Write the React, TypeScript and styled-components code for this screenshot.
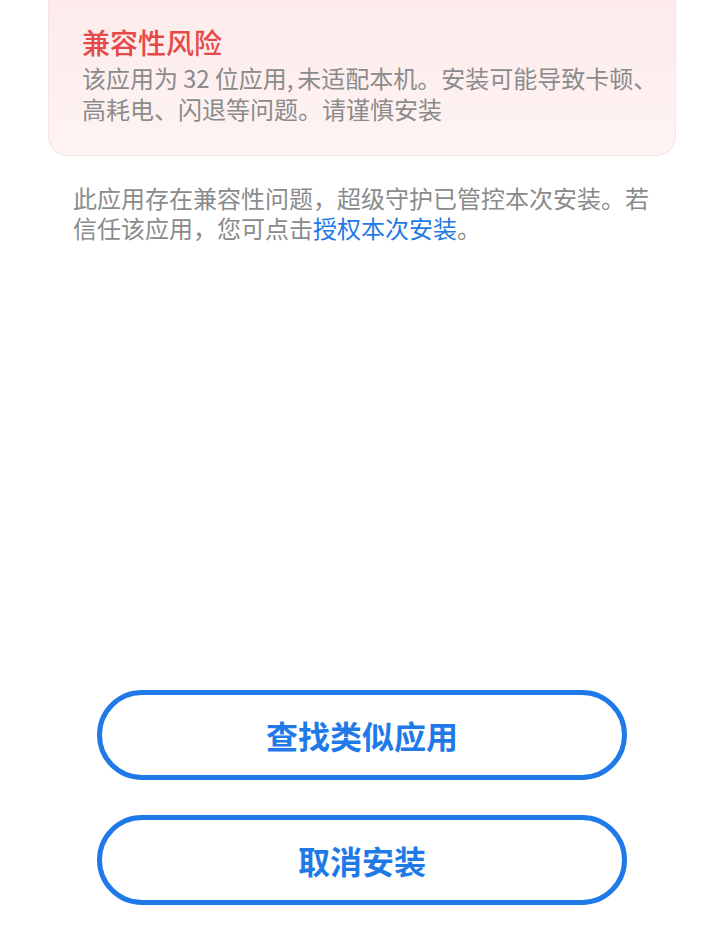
import React from 'react';
import styled, {createGlobalStyle} from "styled-components";

const Global = createGlobalStyle`
  html, body {
    margin: 0;
    padding: 0;
    background: #FFFFFF;
  }
  body {
    font-family: "Noto Sans CJK SC", "Noto Sans", sans-serif;
  }
`;

const Page = styled.main`
  display: flex;
  flex-direction: column;
  min-height: 100vh;
  box-sizing: border-box;
  padding-bottom: 41px;
`;

const RiskCard = styled.section`
  margin: 0 44px 0 48px;
  padding: 24px 12px 31px 33px;
  background: linear-gradient(180deg, #fdebeb 0%, #fef4f3 100%);
  border: 1px solid #f9e3e1;
  border-top: none;
  border-radius: 0 0 20px 20px;
`;

const RiskTitle = styled.h2`
  margin: 0;
  font-size: 28px;
  line-height: 36px;
  font-weight: 500;
  color: #e64a48;
`;

const RiskText = styled.p`
  margin: 2px 0 0;
  font-size: 24px;
  line-height: 31px;
  color: #8b8b8b;
`;

// the digits and comma sit looser in the original font
const Loose = styled.span<{ $left?: number; $right?: number }>`
  margin-left: ${p => p.$left ?? 0}px;
  margin-right: ${p => p.$right ?? 0}px;
`;

const Notice = styled.p`
  margin: 27px 56px 0 73px;
  font-size: 24px;
  line-height: 30px;
  color: #8b8b8b;
`;

const Link = styled.a`
  color: #1f7ae6;
  text-decoration: none;
`;

const Spacer = styled.div`
  flex: 1;
`;

const Actions = styled.div`
  display: flex;
  flex-direction: column;
  align-items: center;
  gap: 35px;
  padding-left: 4px;
`;

const OutlineButton = styled.button`
  width: 530px;
  height: 90px;
  box-sizing: border-box;
  border: 5px solid #1f7ae8;
  border-radius: 45px;
  background: #FFFFFF;
  color: #1f7ae8;
  font-family: "Noto Sans CJK SC", "Noto Sans", sans-serif;
  font-size: 32px;
  font-weight: 700;
  cursor: pointer;
`;

export default function App() {
    return <>
        <Global/>
        <Page>
            <RiskCard>
                <RiskTitle>兼容性风险</RiskTitle>
                <RiskText>该应用为<Loose $left={5} $right={5}>32</Loose>位应用<Loose $right={4}>,</Loose>未适配本机。安装可能导致卡顿、高耗电、闪退等问题。请谨慎安装</RiskText>
            </RiskCard>
            <Notice>
                此应用存在兼容性问题，超级守护已管控本次安装。若信任该应用，您可点击<Link href="#">授权本次安装</Link>。
            </Notice>
            <Spacer/>
            <Actions>
                <OutlineButton>查找类似应用</OutlineButton>
                <OutlineButton>取消安装</OutlineButton>
            </Actions>
        </Page>
    </>;
}
